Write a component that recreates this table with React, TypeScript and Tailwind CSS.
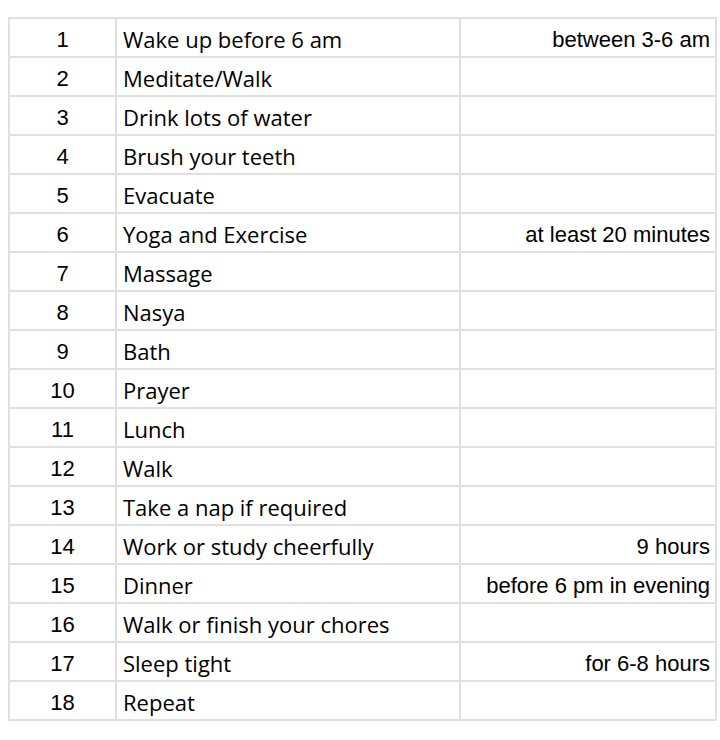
const rows: [string, string][] = [
  ['Wake up before 6 am', 'between 3-6 am'],
  ['Meditate/Walk', ''],
  ['Drink lots of water', ''],
  ['Brush your teeth', ''],
  ['Evacuate', ''],
  ['Yoga and Exercise', 'at least 20 minutes'],
  ['Massage', ''],
  ['Nasya', ''],
  ['Bath', ''],
  ['Prayer', ''],
  ['Lunch', ''],
  ['Walk', ''],
  ['Take a nap if required', ''],
  ['Work or study cheerfully', '9 hours'],
  ['Dinner', 'before 6 pm in evening'],
  ['Walk or finish your chores', ''],
  ['Sleep tight', 'for 6-8 hours'],
  ['Repeat', ''],
];

export default function App() {
  return (
    <div className="w-[720px] h-[740px] bg-white pt-[17px] pl-[8px]">
      <div className="w-[709px] grid grid-cols-[105px_342px_254px] auto-rows-[37px] gap-[2px] p-[2px] bg-[#e0e0e0] text-black text-[22px]">
        {rows.map(([task, note], i) => (
          <div key={i} className="contents">
            <div className="bg-white flex items-center justify-center pt-[4px] font-['Liberation_Sans',Arial,sans-serif]">
              {i + 1}
            </div>
            <div className="bg-white flex items-center pl-[6px] pt-[3px] font-['Open_Sans',sans-serif] whitespace-nowrap">
              {task}
            </div>
            <div className="bg-white flex items-center justify-end pr-[5px] pt-[4px] font-['Liberation_Sans',Arial,sans-serif] whitespace-nowrap">
              {note}
            </div>
          </div>
        ))}
      </div>
    </div>
  );
}
